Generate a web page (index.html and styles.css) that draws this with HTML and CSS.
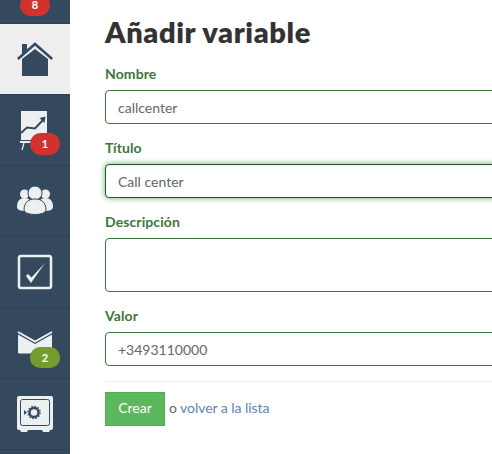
FILE: index.html
```html
<!DOCTYPE html>
<html lang="en">

<head>
  <meta charset="UTF-8" />
  <title>Añadir variable</title>
  <link rel="stylesheet" href="styles.css">
</head>

<body>
  <div class="sidebar">
    <div class="nav-item nav-first">
      <span class="badge badge-red badge-top">8</span>
    </div>
    <div class="nav-item nav-active">
      <svg width="36" height="36" viewBox="0 0 36 36">
        <path d="M5 3h5v8l-5 4z" fill="#34495e" />
        <path d="M.8 18 18 3 35.200 18" fill="none" stroke="#34495e" stroke-width="2.500" />
        <path d="M5 18 18 8 31 18V35H5z" fill="#34495e" />
      </svg>
    </div>
    <div class="nav-item">
      <svg width="38" height="44" viewBox="0 0 38 44">
        <path d="M5 3h26v29H5z" fill="#ecf0f1" />
        <path d="M5 25 11 19.500 19 20.500 27 12" fill="none" stroke="#34495e" stroke-width="2" />
        <path d="M23.500 10 29.500 8.500 28.500 15z" fill="#34495e" />
        <path d="M4 33h11v2H4z" fill="#ecf0f1" />
        <path d="M8 35 6 42" stroke="#ecf0f1" stroke-width="1.200" />
      </svg>
      <span class="badge badge-red">1</span>
    </div>
    <div class="nav-item">
      <svg width="36" height="32" viewBox="0 0 36 32">
        <circle cx="7.500" cy="9" r="4.500" fill="#ecf0f1" />
        <circle cx="28.500" cy="9" r="4.500" fill="#ecf0f1" />
        <path d="M0 22C0 16 3 13 7.500 13S15 16 15 22L8 26C4 26 0 25 0 22z" fill="#ecf0f1" />
        <path d="M36 22C36 16 33 13 28.500 13S21 16 21 22L28 26C32 26 36 25 36 22z" fill="#ecf0f1" />
        <circle cx="18" cy="8" r="7" fill="#ecf0f1" stroke="#34495e" stroke-width="1" />
        <path d="M7 25C7 18 11 14 18 14S29 18 29 25C29 31 7 31 7 25z" fill="#ecf0f1" stroke="#34495e" stroke-width="1" />
      </svg>
    </div>
    <div class="nav-item">
      <svg width="36" height="36" viewBox="0 0 36 36">
        <rect x="2" y="2" width="32" height="32" rx="2" fill="none" stroke="#ecf0f1" stroke-width="2.500" />
        <path d="M9 22 14 29 28 9 14.500 23.500 11 20z" fill="#ecf0f1" />
      </svg>
    </div>
    <div class="nav-item">
      <svg width="36" height="24" viewBox="0 0 36 24">
        <path d="M1 3.500 18 13 35 3.500V21.500a1 1 0 0 1-1 1H2a1 1 0 0 1-1-1z" fill="#ecf0f1" />
        <path d="M1 1 18 10.500 35 1" fill="none" stroke="#ecf0f1" stroke-width="2" />
      </svg>
      <span class="badge badge-green">2</span>
    </div>
    <div class="nav-item">
      <svg width="36" height="36" viewBox="0 0 36 36">
        <path d="M2 0h32a2 2 0 0 1 2 2v30a2 2 0 0 1-2 2h-1l-1 2h-6l-1-2H11l-1 2H4l-1-2H2a2 2 0 0 1-2-2V2a2 2 0 0 1 2-2z" fill="#ecf0f1" />
        <rect x="3.500" y="3.500" width="29" height="26" rx="2" fill="none" stroke="#34495e" stroke-width="1" />
        <circle cx="17" cy="16.500" r="4.500" fill="none" stroke="#34495e" stroke-width="2.500" />
        <circle cx="17" cy="16.500" r="6.200" fill="none" stroke="#34495e" stroke-width="1.200" stroke-dasharray="1.600 1.600" />
        <path d="M7 14 10 16.500 7 19z" fill="#34495e" />
      </svg>
    </div>
  </div>

  <div class="content">
    <h1>Añadir variable</h1>
    <form onsubmit="return false">
      <label for="nombre">Nombre</label>
      <input type="text" id="nombre" value="callcenter" />
      <label for="titulo">Título</label>
      <input type="text" id="titulo" class="focused" value="Call center" />
      <label for="descripcion">Descripción</label>
      <textarea id="descripcion"></textarea>
      <label for="valor">Valor</label>
      <input type="text" id="valor" value="+3493110000" />
      <hr />
      <div class="actions">
        <button type="submit">Crear</button>
        <span class="or">o <a href="#">volver a la lista</a></span>
      </div>
    </form>
  </div>
</body>

</html>
```

FILE: styles.css
```css
html,
body {
  height: 100%;
}

body {
  margin: 0;
  display: flex;
  overflow: hidden;
  font-family: "Lato", "Liberation Sans", sans-serif;
  background-color: white;
}

.sidebar {
  width: 70px;
  flex-shrink: 0;
  background-color: #34495e;
}

.nav-item {
  position: relative;
  height: 70px;
  display: flex;
  justify-content: center;
  align-items: center;
  border-bottom: 1px solid #2d3f52;
}

.nav-first {
  height: 23px;
}

.nav-active {
  background-color: #eeeeee;
}

.badge {
  position: absolute;
  right: 10px;
  bottom: 10px;
  width: 30px;
  height: 22px;
  border-radius: 11px;
  color: white;
  font-size: 11px;
  font-weight: 700;
  line-height: 22px;
  text-align: center;
}

.badge-top {
  top: -6px;
  bottom: auto;
  right: 20px;
  line-height: 21px;
}

.badge-red {
  background-color: #d2322d;
}

.badge-green {
  height: 21px;
  border-radius: 10px;
  line-height: 21px;
  background-color: #739e2c;
}

.content {
  flex: 1;
  min-width: 0;
  padding: 15px 0 0 35px;
}

h1 {
  margin: 0 0 16px;
  color: #333333;
  font-size: 29px;
  font-weight: 800;
  line-height: 34px;
  letter-spacing: 0.6px;
  white-space: nowrap;
}

label {
  display: block;
  margin-bottom: 8px;
  color: #3c763d;
  font-size: 14px;
  font-weight: 700;
  line-height: 17px;
  letter-spacing: 0.1px;
}

input,
textarea {
  display: block;
  box-sizing: border-box;
  width: 420px;
  margin-bottom: 15px;
  padding: 6px 12px;
  border: 1px solid #3c763d;
  border-radius: 4px;
  outline: none;
  color: #666666;
  font-family: inherit;
  font-size: 14px;
  line-height: 20px;
}

input {
  height: 34px;
}

textarea {
  height: 54px;
  resize: none;
}

.focused {
  border-color: #2b542c;
  box-shadow: inset 0 1px 1px rgba(0, 0, 0, 0.075), 0 0 6px #67b168;
}

hr {
  width: 420px;
  margin: 15px 0 10px;
  border: none;
  border-top: 1px solid #eeeeee;
}

.actions {
  display: flex;
  align-items: center;
  gap: 4px;
}

button {
  width: 60px;
  height: 34px;
  padding: 0 0 3px;
  border: 1px solid #4cae4c;
  background-color: #5cb85c;
  color: white;
  font-family: inherit;
  font-size: 14px;
}

.or {
  margin-bottom: 4px;
  color: #666666;
  font-size: 14px;
  letter-spacing: -0.05px;
}

a {
  color: #5b84b5;
  text-decoration: none;
}
```
